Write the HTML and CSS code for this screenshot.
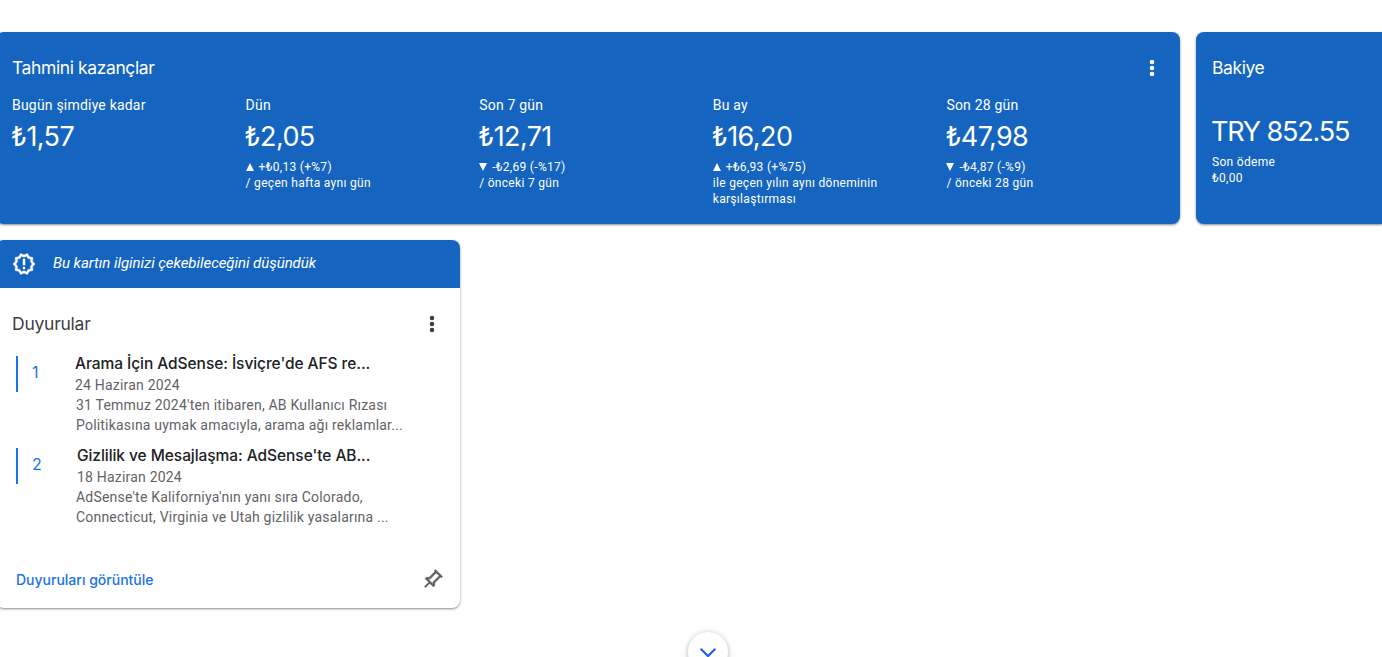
FILE: index.html
```html
<!DOCTYPE html>
<html lang="tr">
<head>
    <meta charset="UTF-8">
    <meta name="viewport" content="width=device-width, initial-scale=1.0">
    <title>AdSense</title>
    <link rel="stylesheet" href="styles.css">
</head>
<body>

    <main class="panel">
        <div class="ust-satir">
            <section class="kart mavi kazanc">
                <header class="kart-baslik">
                    <h2>Tahmini kazançlar</h2>
                    <svg class="menu" viewBox="0 0 24 24"><circle cx="12" cy="6" r="2.3"/><circle cx="12" cy="12" r="2.3"/><circle cx="12" cy="18" r="2.3"/></svg>
                </header>
                <div class="kolonlar">
                    <div class="kolon">
                        <h3>Bugün şimdiye kadar</h3>
                        <p class="tutar">₺1,57</p>
                    </div>
                    <div class="kolon">
                        <h3>Dün</h3>
                        <p class="tutar">₺2,05</p>
                        <p class="fark"><i class="ok yukari"></i>+₺0,13 (+%7)</p>
                        <p class="not">/ geçen hafta aynı gün</p>
                    </div>
                    <div class="kolon">
                        <h3>Son 7 gün</h3>
                        <p class="tutar">₺12,71</p>
                        <p class="fark"><i class="ok asagi"></i>-₺2,69 (-%17)</p>
                        <p class="not">/ önceki 7 gün</p>
                    </div>
                    <div class="kolon">
                        <h3>Bu ay</h3>
                        <p class="tutar">₺16,20</p>
                        <p class="fark"><i class="ok yukari"></i>+₺6,93 (+%75)</p>
                        <p class="not">ile geçen yılın aynı döneminin<br>karşılaştırması</p>
                    </div>
                    <div class="kolon">
                        <h3>Son 28 gün</h3>
                        <p class="tutar">₺47,98</p>
                        <p class="fark"><i class="ok asagi"></i>-₺4,87 (-%9)</p>
                        <p class="not">/ önceki 28 gün</p>
                    </div>
                </div>
            </section>

            <section class="kart mavi bakiye">
                <header class="kart-baslik">
                    <h2>Bakiye</h2>
                </header>
                <p class="tutar">TRY 852.55</p>
                <p class="not">Son ödeme<br>₺0,00</p>
            </section>
        </div>

        <section class="kart duyurular">
            <div class="oneri">
                <svg viewBox="0 0 24 24"><path d="M23 12l-2.44-2.78.34-3.68-3.61-.82-1.89-3.18L12 3 8.6 1.54 6.71 4.72l-3.61.81.34 3.68L1 12l2.44 2.78-.34 3.69 3.61.82 1.89 3.18L12 21l3.4 1.46 1.89-3.18 3.61-.82-.34-3.68L23 12zm-4.51 2.11l.26 2.79-2.74.62-1.43 2.41L12 18.82l-2.58 1.11-1.43-2.41-2.74-.62.26-2.8L3.66 12l1.85-2.12-.26-2.78 2.74-.61 1.43-2.41L12 5.18l2.58-1.11 1.43 2.41 2.74.62-.26 2.79L20.34 12l-1.85 2.11zM11 15h2v2h-2zm0-8h2v6h-2z"/></svg>
                <em>Bu kartın ilginizi çekebileceğini düşündük</em>
            </div>
            <header class="kart-baslik">
                <h2>Duyurular</h2>
                <svg class="menu" viewBox="0 0 24 24"><circle cx="12" cy="6" r="2.3"/><circle cx="12" cy="12" r="2.3"/><circle cx="12" cy="18" r="2.3"/></svg>
            </header>
            <ol class="liste">
                <li>
                    <span class="sira">1</span>
                    <div class="icerik">
                        <h4>Arama İçin AdSense: İsviçre'de AFS re...</h4>
                        <time>24 Haziran 2024</time>
                        <p>31 Temmuz 2024'ten itibaren, AB Kullanıcı Rızası<br>Politikasına uymak amacıyla, arama ağı reklamlar...</p>
                    </div>
                </li>
                <li>
                    <span class="sira">2</span>
                    <div class="icerik ikinci">
                        <h4>Gizlilik ve Mesajlaşma: AdSense'te AB...</h4>
                        <time>18 Haziran 2024</time>
                        <p>AdSense'te Kaliforniya'nın yanı sıra Colorado,<br>Connecticut, Virginia ve Utah gizlilik yasalarına ...</p>
                    </div>
                </li>
            </ol>
            <footer class="kart-alt">
                <a href="#">Duyuruları görüntüle</a>
                <svg class="igne" viewBox="0 0 24 24"><path d="M16 12V4h1V2H7v2h1v8l-2 2v2h5.2v6h1.6v-6H18v-2l-2-2zm-7.2 2l1.2-1.2V4h4v8.8l1.2 1.2H8.8z"/></svg>
            </footer>
        </section>

        <button class="daha" type="button">
            <svg viewBox="0 0 24 24"><path d="M4 8.5l8 8 8-8"/></svg>
        </button>
    </main>

</body>
</html>
```
FILE: styles.css
```css
* {
    margin: 0;
    padding: 0;
    box-sizing: border-box;
}

:root {
    --mavi: #1565c0;
    --link: #1a73e8;
    --gri: #5f6368;
    --baslik-font: "Inter", "Roboto", sans-serif;
}

body {
    height: 657px;
    overflow: hidden;
    background: #fff;
    color: #202124;
    font-family: "Roboto", sans-serif;
}

.panel {
    display: flex;
    flex-direction: column;
    padding-top: 32px;
    margin-left: -4px;
}

.ust-satir {
    display: flex;
    gap: 16px;
    margin-bottom: 16px;
}

.kart {
    flex: none;
    border-radius: 8px;
    background: #fff;
    box-shadow: 0 1px 2px rgba(60, 64, 67, .45), 0 1px 3px rgba(60, 64, 67, .2);
}

.mavi {
    height: 192px;
    background: var(--mavi);
    color: #fff;
}

.kazanc {
    width: 1184px;
}

.bakiye {
    flex: 1;
    border-radius: 8px 0 0 8px;
}

.kart-baslik {
    display: flex;
    justify-content: space-between;
    align-items: center;
    height: 24px;
    margin: 24px 16px 0;
}

h2 {
    font: 400 17.5px/24px var(--baslik-font);
    letter-spacing: -.4px;
}

.menu {
    width: 24px;
    height: 24px;
    fill: currentColor;
}

.kolonlar {
    display: grid;
    grid-template-columns: repeat(5, 233.6px);
    padding: 15px 0 0 16px;
}

h3 {
    font-size: 14px;
    font-weight: 400;
    line-height: 20px;
    letter-spacing: .2px;
}

.tutar {
    margin: 4px 0 0 -1px;
    font: 400 27px/36px var(--baslik-font);
    letter-spacing: -.6px;
}

.fark,
.not {
    font-size: 12px;
    line-height: 16px;
    letter-spacing: .3px;
}

.fark {
    display: flex;
    align-items: center;
    gap: 5px;
    margin-top: 4px;
}

.ok {
    border: 4px solid transparent;
}

.yukari {
    border-top: none;
    border-bottom: 8px solid #fff;
}

.asagi {
    border-bottom: none;
    border-top: 8px solid #fff;
}

.bakiye .tutar {
    margin: 34px 0 0 15px;
    letter-spacing: -1.15px;
}

.bakiye .not {
    margin: 4px 16px 0;
}

.duyurular {
    display: flex;
    flex-direction: column;
    width: 464px;
    height: 368px;
}

.oneri {
    display: flex;
    align-items: center;
    gap: 17px;
    height: 48px;
    padding-left: 16px;
    border-radius: 8px 8px 0 0;
    background: var(--mavi);
    color: #fff;
    font-size: 15px;
}

.oneri svg {
    width: 24px;
    height: 24px;
    fill: #fff;
    stroke: #fff;
    stroke-width: .5;
}

.oneri em {
    padding-bottom: 2px;
    letter-spacing: -.05px;
}

.duyurular .kart-baslik {
    color: #3c4043;
}

.duyurular h2 {
    letter-spacing: -.25px;
}

.liste {
    padding: 18px 20px 0;
    list-style: none;
}

.liste li {
    display: flex;
    height: 92px;
}

.sira {
    width: 60px;
    height: 36px;
    margin-top: 2px;
    padding-left: 14px;
    border-left: 2px solid var(--link);
    color: var(--link);
    font: 400 16px/32px var(--baslik-font);
}

.icerik {
    color: var(--gri);
    font-size: 14px;
    line-height: 20px;
    letter-spacing: .2px;
    white-space: nowrap;
}

.icerik h4 {
    margin: 0 0 1px -1px;
    color: #202124;
    font: 500 15.5px/20px var(--baslik-font);
    letter-spacing: -.06px;
}

.icerik time {
    display: block;
    margin-left: -1px;
}

.ikinci h4,
.ikinci time {
    margin-left: 1px;
}

.kart-alt {
    display: flex;
    justify-content: space-between;
    align-items: center;
    margin: auto 16px 16px 20px;
}

.kart-alt a {
    color: var(--link);
    font: 500 14px/24px var(--baslik-font);
    text-decoration: none;
}

.igne {
    width: 24px;
    height: 24px;
    fill: var(--gri);
    stroke: var(--gri);
    stroke-width: .4;
    transform: rotate(45deg);
}

.daha {
    display: flex;
    align-items: center;
    justify-content: center;
    width: 40px;
    height: 40px;
    margin: 24px 0 0 692px;
    border: none;
    border-radius: 50%;
    background: #fff;
    box-shadow: 0 1px 5px rgba(0, 0, 0, .2), 0 2px 10px rgba(0, 0, 0, .12);
}

.daha svg {
    width: 22px;
    height: 22px;
    fill: none;
    stroke: #2563eb;
    stroke-width: 2.4;
}
```
